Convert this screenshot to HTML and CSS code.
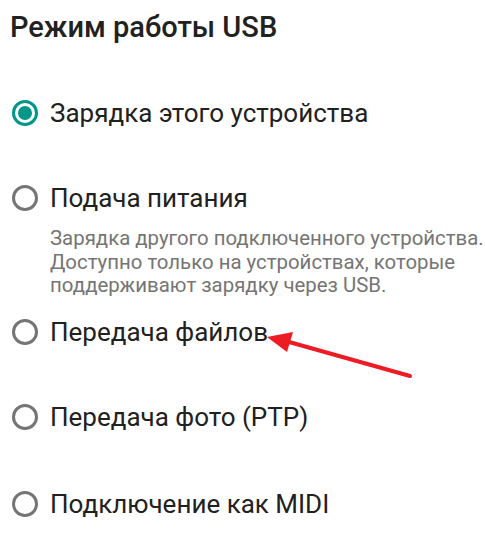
FILE: index.html
```html
<!DOCTYPE html>
<html lang="ru">
<head>
<meta charset="utf-8">
<link rel="stylesheet" href="styles.css">
</head>
<body>
<div class="page">
  <h1 class="title">Режим работы USB</h1>
  <div class="list">
    <div class="item">
      <span class="radio checked"></span>
      <span class="label">Зарядка этого устройства</span>
    </div>
    <div class="item with-desc">
      <span class="radio"></span>
      <span class="label">Подача питания</span>
    </div>
    <div class="desc">Зарядка другого подключенного устройства. Доступно только на устройствах, которые поддерживают зарядку через USB.</div>
    <div class="item">
      <span class="radio"></span>
      <span class="label">Передача файлов</span>
    </div>
    <div class="item">
      <span class="radio"></span>
      <span class="label">Передача фото (PTP)</span>
    </div>
    <div class="item last">
      <span class="radio"></span>
      <span class="label">Подключение как MIDI</span>
    </div>
  </div>
  <svg class="arrow" width="485" height="539" viewBox="0 0 485 539">
    <line x1="410" y1="376" x2="282" y2="340" stroke="#ed1c24" stroke-width="4" stroke-linecap="round"/>
    <polygon points="267,337 293,332 287,352" fill="#ed1c24"/>
  </svg>
</div>
</body>
</html>
```

FILE: styles.css
```css
* { box-sizing: border-box; }
html, body { margin: 0; padding: 0; background: #fff; }
body { font-family: Roboto, "Noto Sans", sans-serif; color: #212121; }
.page { position: relative; width: 485px; height: 539px; overflow: hidden; }
.title {
  margin: 0;
  padding: 9px 0 0 10px;
  font-size: 29px;
  font-weight: 500;
  line-height: 36px;
  color: #212121;
}
.list { display: flex; flex-direction: column; padding-top: 48px; }
.item {
  display: flex;
  align-items: center;
  gap: 12px;
  padding-left: 12px;
  height: 40px;
  margin-bottom: 45px;
}
.item.with-desc { margin-bottom: 0; }
.item.last { margin-top: 2px; }
.label { font-size: 26px; line-height: 40px; color: #212121; }
.radio {
  width: 26px;
  height: 26px;
  border-radius: 50%;
  border: 3px solid #757575;
  flex: none;
  position: relative;
}
.radio.checked { border-color: #009688; }
.radio.checked::after {
  content: "";
  position: absolute;
  left: 3px; top: 3px;
  width: 14px; height: 14px;
  border-radius: 50%;
  background: #009688;
}
.desc {
  padding: 9px 0 0 50px;
  font-size: 20.4px;
  line-height: 23.5px;
  color: #757575;
  margin-bottom: 14.5px;
}
.arrow { position: absolute; left: 0; top: 0; pointer-events: none; }
```
